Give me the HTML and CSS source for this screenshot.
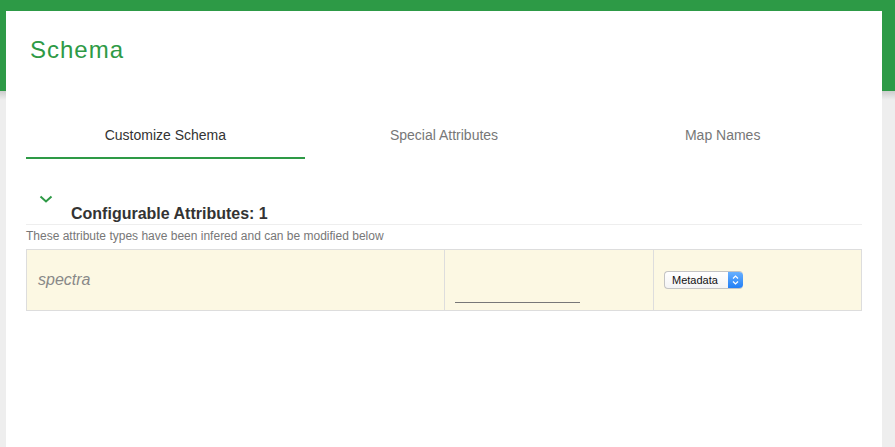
FILE: index.html
```html
<!DOCTYPE html>
<html>
<head>
<meta charset="utf-8">
<link rel="stylesheet" href="styles.css">
</head>
<body>
<div class="card">
  <h1 class="title">Schema</h1>
  <nav class="tabs">
    <div class="tab active">Customize Schema</div>
    <div class="tab">Special Attributes</div>
    <div class="tab">Map Names</div>
  </nav>
  <section class="attrs">
    <svg class="chevron" width="14" height="8" viewBox="0 0 14 8"><polyline points="1.5,1.5 7,6.5 12.5,1.5" fill="none" stroke="#2e9a46" stroke-width="2"/></svg>
    <h2 class="attrs-title">Configurable Attributes: 1</h2>
    <p class="attrs-desc">These attribute types have been infered and can be modified below</p>
    <div class="attr-row">
      <div class="cell cell-name">spectra</div>
      <div class="cell cell-input"><span class="line-input"></span></div>
      <div class="cell cell-select">
        <div class="select">
          <span class="select-text">Metadata</span>
          <span class="select-arrow">
            <svg width="15" height="16" viewBox="0 0 15 16"><polyline points="5,6.5 7.5,4 10,6.5" fill="none" stroke="#fff" stroke-width="1.2"/><polyline points="5,9.5 7.5,12 10,9.5" fill="none" stroke="#fff" stroke-width="1.2"/></svg>
          </span>
        </div>
      </div>
    </div>
  </section>
</div>
</body>
</html>
```

FILE: styles.css
```css
html, body {
  margin: 0;
  padding: 0;
}
body {
  height: 447px;
  overflow: hidden;
  font-family: "Liberation Sans", Arial, sans-serif;
  background: linear-gradient(to bottom, #2d9a46 0, #2d9a46 91px, #cdcdcd 91px, #eeeeee 100px, #eeeeee 100%);
}
.card {
  box-sizing: border-box;
  width: 876px;
  height: 436px;
  margin: 11px 0 0 6px;
  padding: 0 20px;
  background: #fff;
  overflow: hidden;
}
.title {
  margin: 25px 0 0 4px;
  font-size: 24px;
  line-height: 28px;
  font-weight: normal;
  letter-spacing: 1px;
  color: #2e9a46;
}
.tabs {
  display: flex;
  margin-top: 51px;
}
.tab {
  flex: 1;
  text-align: center;
  font-size: 14px;
  line-height: 20px;
  padding: 10px 0 12px;
  color: #777;
  border-bottom: 2px solid transparent;
}
.tab.active {
  color: #333;
  border-bottom-color: #2e9a46;
}
.attrs {
  padding-top: 36px;
}
.chevron {
  display: block;
  margin-left: 13px;
}
.attrs-title {
  margin: 1px 0 0;
  padding-left: 45px;
  font-size: 16px;
  line-height: 20px;
  font-weight: bold;
  color: #333;
  border-bottom: 1px solid #eee;
}
.attrs-desc {
  margin: 3px 0 0;
  font-size: 12px;
  line-height: 16px;
  color: #777;
}
.attr-row {
  display: grid;
  grid-template-columns: 417px 209px 1fr;
  margin-top: 5px;
  border: 1px solid #ddd;
  background: #fcf8e3;
}
.cell {
  height: 60px;
  box-sizing: border-box;
  display: flex;
  align-items: center;
}
.cell + .cell {
  border-left: 1px solid #ddd;
}
.cell-name {
  padding-left: 11px;
  font-size: 16px;
  font-style: italic;
  color: #888;
}
.cell-input {
  padding: 0 10px 7px;
  align-items: flex-end;
}
.line-input {
  display: block;
  width: 125px;
  height: 20px;
  border-bottom: 1px solid #777;
}
.cell-select {
  padding-left: 10px;
}
.select {
  display: flex;
  box-sizing: border-box;
  width: 79px;
  height: 18px;
  border: 1px solid #c4c4c4;
  border-right: 0;
  border-radius: 4px;
  background: linear-gradient(#fff, #f4f4f4);
  overflow: hidden;
}
.select-text {
  flex: 1;
  font-size: 11px;
  line-height: 16px;
  padding-left: 7px;
  color: #111;
}
.select-arrow {
  width: 15px;
  margin-top: -1px;
  height: 18px;
  background: linear-gradient(#6cb3ff, #1e7cf5);
  border-radius: 0 4px 4px 0;
}
.select-arrow svg {
  display: block;
  margin-top: 1px;
}
```
